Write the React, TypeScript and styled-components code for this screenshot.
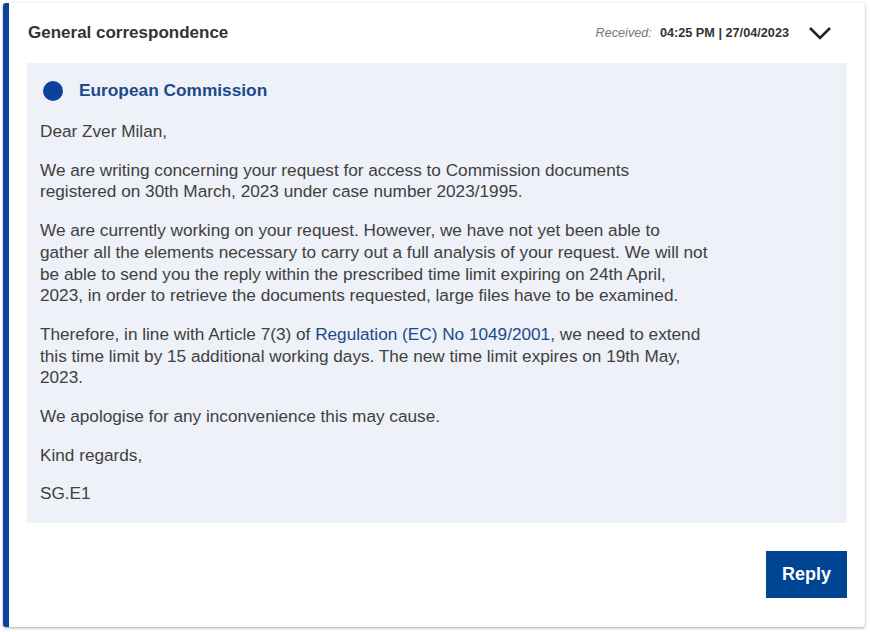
import React from 'react';
import styled, { createGlobalStyle } from 'styled-components';

const GlobalStyle = createGlobalStyle`
  body {
    margin: 0;
    background: #ffffff;
    font-family: Arial, 'Liberation Sans', sans-serif;
  }
`;

const Page = styled.div`
  padding: 3px 5px 5px 3px;
`;

const Card = styled.div`
  background: #fff;
  border-left: 6px solid #0b439c;
  border-radius: 3px;
  box-shadow: 0 1px 3px rgba(0, 0, 0, 0.35);
  padding: 0 18px 29px 18px;
`;

const Header = styled.div`
  display: flex;
  align-items: center;
  justify-content: space-between;
  height: 60px;
  padding-left: 1px;
`;

const Title = styled.h2`
  margin: 0;
  font-size: 17px;
  font-weight: bold;
  color: #333;
`;

const Meta = styled.div`
  display: flex;
  align-items: center;
  font-size: 12.7px;
  color: #333;
`;

const MetaLabel = styled.span`
  font-style: italic;
  color: #777;
  margin-right: 8px;
`;

const MetaValue = styled.span`
  font-weight: bold;
`;

const Toggle = styled.button`
  border: 0;
  background: none;
  padding: 0;
  margin: 0 14px 0 18px;
  width: 26px;
  height: 24px;
  display: flex;
  align-items: center;
  justify-content: center;
`;

const Message = styled.div`
  background: #eef1f7;
  padding: 17px 13px 18px 13px;
  margin-bottom: 28px;
`;

const Sender = styled.div`
  display: flex;
  align-items: center;
  gap: 16px;
  margin-left: 3px;
  margin-bottom: 20px;
`;

const Dot = styled.span`
  width: 20px;
  height: 20px;
  border-radius: 50%;
  background: #0b439c;
`;

const SenderName = styled.span`
  color: #1a4a8c;
  font-weight: bold;
  font-size: 17.3px;
`;

const Para = styled.p`
  margin: 0 0 17px 0;
  max-width: 740px;
  font-size: 17.2px;
  line-height: 21.7px;
  color: #404040;
  &:last-child {
    margin-bottom: 0;
  }
`;

const Link = styled.a`
  color: #1a4a8c;
  text-decoration: none;
`;

const Footer = styled.div`
  display: flex;
  justify-content: flex-end;
`;

const ReplyButton = styled.button`
  background: #004494;
  color: #fff;
  border: 0;
  width: 81px;
  height: 47px;
  font-family: Arial, 'Liberation Sans', sans-serif;
  font-weight: bold;
  font-size: 18px;
`;

const Chevron = () => (
  <svg width="24" height="14" viewBox="0 0 24 14">
    <path d="M2 2 L12 12 L22 2" fill="none" stroke="#222" strokeWidth="2.6" />
  </svg>
);

export default function App() {
  return (
    <Page>
      <GlobalStyle />
      <Card>
        <Header>
          <Title>General correspondence</Title>
          <Meta>
            <MetaLabel>Received:</MetaLabel>
            <MetaValue>04:25 PM | 27/04/2023</MetaValue>
            <Toggle>
              <Chevron />
            </Toggle>
          </Meta>
        </Header>
        <Message>
          <Sender>
            <Dot />
            <SenderName>European Commission</SenderName>
          </Sender>
          <Para>Dear Zver Milan,</Para>
          <Para>
            We are writing concerning your request for access to Commission documents
            <br />
            registered on 30th March, 2023 under case number 2023/1995.
          </Para>
          <Para>
            We are currently working on your request. However, we have not yet been able to
            <br />
            gather all the elements necessary to carry out a full analysis of your request. We will not
            <br />
            be able to send you the reply within the prescribed time limit expiring on 24th April,
            <br />
            2023, in order to retrieve the documents requested, large files have to be examined.
          </Para>
          <Para>
            Therefore, in line with Article 7(3) of <Link>Regulation (EC) No 1049/2001</Link>, we need to extend
            <br />
            this time limit by 15 additional working days. The new time limit expires on 19th May,
            <br />
            2023.
          </Para>
          <Para>We apologise for any inconvenience this may cause.</Para>
          <Para>Kind regards,</Para>
          <Para>SG.E1</Para>
        </Message>
        <Footer>
          <ReplyButton>Reply</ReplyButton>
        </Footer>
      </Card>
    </Page>
  );
}
